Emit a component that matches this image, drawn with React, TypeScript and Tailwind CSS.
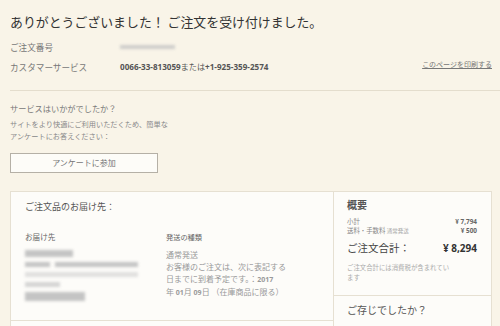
const jp = { fontFamily: '"Noto Sans CJK JP", "Noto Sans", sans-serif' };
const num = { fontFamily: '"Open Sans", "Noto Sans CJK JP", sans-serif' };

function Blur({ className }: { className: string }) {
  return <div className={"bg-[#c4c4c4] blur-[1.4px] " + className} />;
}

export default function App() {
  return (
    <div
      className="w-[500px] h-[326px] overflow-hidden bg-[#f9f4e8] text-[#333]"
      style={jp}
    >
      <div className="px-[10px] pt-[12px]">
        <h1 className="text-[12.9px] leading-[20px] text-[#333]">
          ありがとうございました！ ご注文を受け付けました。
        </h1>
        <div className="mt-[8px] flex items-center h-[14px]">
          <span className="w-[110px] text-[8.6px] text-[#777]">ご注文番号</span>
          <Blur className="w-[55px] h-[4px] opacity-80" />
        </div>
        <div className="mt-[6px] flex items-center h-[14px]">
          <span className="w-[110px] text-[8.6px] text-[#777]">
            カスタマーサービス
          </span>
          <span className="text-[8.1px] font-bold text-[#555]" style={num}>
            0066-33-813059<span className="font-normal" style={jp}>または</span>+1-925-359-2574
          </span>
          <a className="ml-auto -mt-[6px] -mr-[2px] text-[7px] text-[#777] underline">
            このページを印刷する
          </a>
        </div>
      </div>

      <div className="ml-[10px] mt-[16px] border-t border-[#e4ddcd]" />

      <div className="px-[10px] pt-[10px]">
        <p className="text-[8.2px] leading-[14px] text-[#777]">
          サービスはいかがでしたか？
        </p>
        <p className="mt-[3px] text-[7.2px] leading-[12px] text-[#888]">
          サイトをより快適にご利用いただくため、簡単な
          <br />
          アンケートにお答えください：
        </p>
        <button className="mt-[11px] w-[148px] h-[20px] border border-[#b5b0a6] bg-[#fdfcf8] text-[8px] text-[#777]">
          アンケートに参加
        </button>

        <div className="mt-[18px] flex border border-[#e6e0d2] bg-[#fdfcf9] w-[482px]">
          <div className="w-[322px] flex flex-col">
            <div className="h-[129px] border-b border-[#e6e0d2] pl-[14px] pt-[8px]">
              <p className="text-[9px] leading-[14px] text-[#555]">
                ご注文品のお届け先：
              </p>
              <div className="mt-[17px] flex">
                <div className="w-[141px]">
                  <p className="text-[7.6px] leading-[12px] text-[#666]">お届け先</p>
                  <div className="mt-[7px] flex flex-col gap-[5px]">
                    <Blur className="w-[48px] h-[7px]" />
                    <div className="flex gap-[5px]">
                      <Blur className="w-[25px] h-[5px]" />
                      <Blur className="w-[83px] h-[5px]" />
                    </div>
                    <Blur className="w-[113px] h-[5px] opacity-50" />
                    <Blur className="w-[35px] h-[5px] opacity-70" />
                    <Blur className="w-[60px] h-[9px]" />
                  </div>
                </div>
                <div>
                  <p className="text-[7.2px] leading-[12px] text-[#666]">発送の種類</p>
                  <p className="mt-[6px] text-[8px] leading-[12px] text-[#999]">
                    通常発送
                    <br />
                    お客様のご注文は、次に表記する
                    <br />
                    日までに到着予定です。：<span className="font-bold text-[7px]" style={num}>2017</span>
                    <br />
                    年 <span className="font-bold text-[7px]" style={num}>01</span>月 <span className="font-bold text-[7px]" style={num}>09</span>日 （在庫商品に限る）
                  </p>
                </div>
              </div>
            </div>
            <div className="h-[20px]" />
          </div>

          <div className="flex-1 border-l border-[#e6e0d2]">
            <div className="pl-[13px] pr-[14px] pt-[6px] pb-[12px] border-b border-[#e6e0d2]">
              <p className="text-[10px] leading-[14px] font-bold text-[#555]">概要</p>
              <div className="mt-[5px] flex justify-between text-[6.4px] leading-[9px] text-[#888]">
                <span>小計</span>
                <span className="font-bold text-[#666]" style={num}>¥ 7,794</span>
              </div>
              <div className="flex justify-between text-[6.4px] leading-[9px] text-[#888]">
                <span>
                  送料・手数料 <span className="text-[5.5px] text-[#aaa]">通常発送</span>
                </span>
                <span className="font-bold text-[#666]" style={num}>¥ 500</span>
              </div>
              <div className="mt-[4px] flex justify-between items-center h-[16px]">
                <span className="text-[10.5px] text-[#444]">ご注文合計：</span>
                <span className="text-[10px] font-bold text-[#333]" style={num}>¥ 8,294</span>
              </div>
              <p className="mt-[7px] text-[6.4px] leading-[10px] text-[#aaa]">
                ご注文合計には消費税が含まれてい
                <br />
                ます
              </p>
            </div>
            <p className="pl-[13px] pt-[6px] text-[10px] leading-[16px] text-[#555]">
              ご存じでしたか？
            </p>
          </div>
        </div>
      </div>
    </div>
  );
}
